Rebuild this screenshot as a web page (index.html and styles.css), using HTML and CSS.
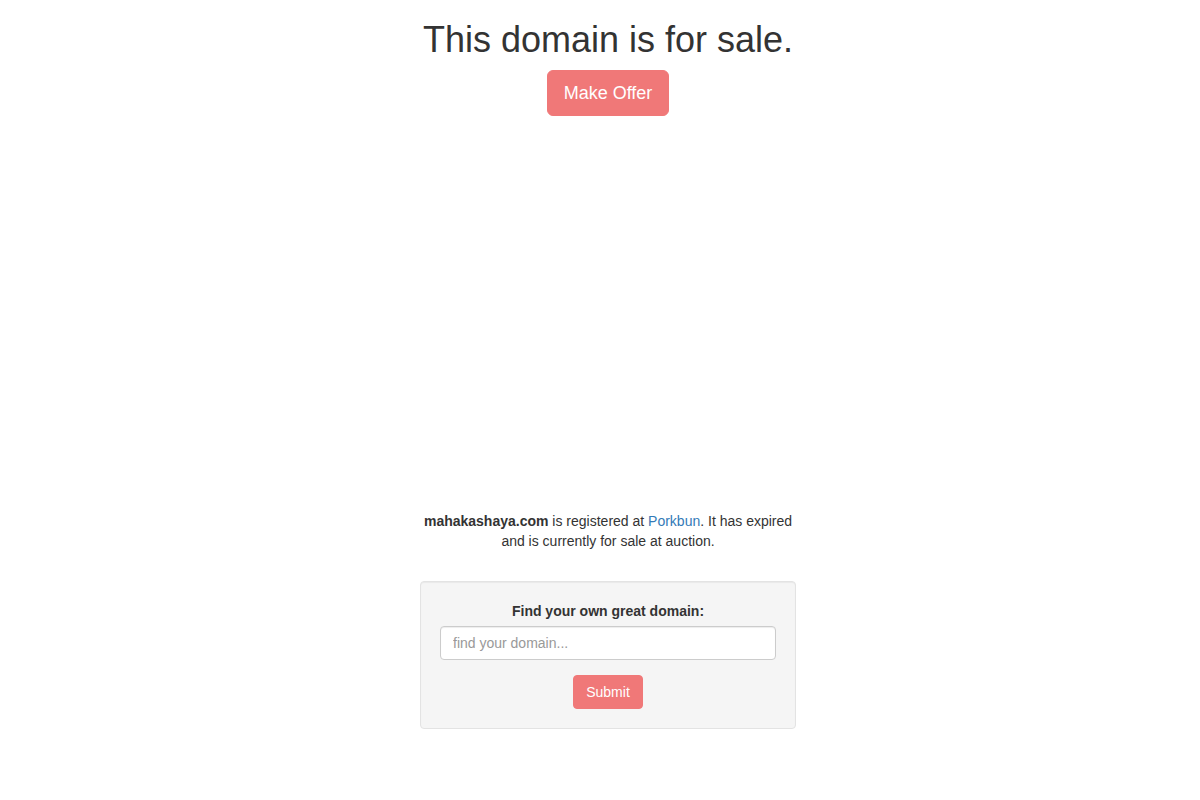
FILE: index.html
```html
<!DOCTYPE html>
<html lang="en">
<head>
<meta charset="utf-8">
<title>This domain is for sale.</title>
<link rel="stylesheet" href="styles.css">
</head>
<body>
<main class="page">
  <section class="hero">
    <h1 class="title">This domain is for sale.</h1>
    <button class="btn btn-lg" type="button">Make Offer</button>
  </section>
  <div class="ad-space"></div>
  <section class="info">
    <p class="note"><strong>mahakashaya.com</strong> is registered at <a href="#" class="link">Porkbun</a>. It has expired and is currently for sale at auction.</p>
    <form class="well">
      <label class="label" for="domain">Find your own great domain:</label>
      <input id="domain" class="input" type="text" placeholder="find your domain...">
      <button class="btn btn-sm" type="button">Submit</button>
    </form>
  </section>
</main>
</body>
</html>
```
FILE: styles.css
```css
* { box-sizing: border-box; }
html, body { margin: 0; padding: 0; background: #fff; }
body {
  font-family: "Liberation Sans", Arial, Helvetica, sans-serif;
  font-size: 14px;
  line-height: 20px;
  color: #333;
}
.page {
  display: flex;
  flex-direction: column;
  align-items: center;
  padding-left: 16px;
}
.hero {
  display: flex;
  flex-direction: column;
  align-items: center;
}
.title {
  margin: 20px 0 10px;
  font-size: 36px;
  font-weight: 500;
  line-height: 1.1;
  color: #333;
}
.btn {
  border: 1px solid #f07878;
  background: #f07878;
  color: #fff;
  font-family: inherit;
  cursor: pointer;
}
.btn-lg {
  padding: 10px 16px;
  font-size: 18px;
  line-height: 24px;
  border-radius: 6px;
}
.btn-sm {
  padding: 6px 12px;
  font-size: 14px;
  line-height: 20px;
  border-radius: 4px;
}
.ad-space {
  height: 395px;
  width: 100%;
}
.info {
  width: 376px;
  text-align: center;
}
.note {
  margin: 0 0 30px;
}
.link { color: #337ab7; text-decoration: none; }
.well {
  display: flex;
  flex-direction: column;
  align-items: center;
  padding: 19px;
  background: #f5f5f5;
  border: 1px solid #e3e3e3;
  border-radius: 4px;
  box-shadow: inset 0 1px 1px rgba(0,0,0,0.05);
}
.label {
  font-weight: bold;
  margin-bottom: 5px;
}
.input {
  width: 100%;
  height: 34px;
  padding: 6px 12px;
  font-family: inherit;
  font-size: 14px;
  line-height: 20px;
  color: #555;
  background: #fff;
  border: 1px solid #ccc;
  border-radius: 4px;
  box-shadow: inset 0 1px 1px rgba(0,0,0,0.075);
  margin-bottom: 15px;
}
.input::placeholder { color: #999; }
```
